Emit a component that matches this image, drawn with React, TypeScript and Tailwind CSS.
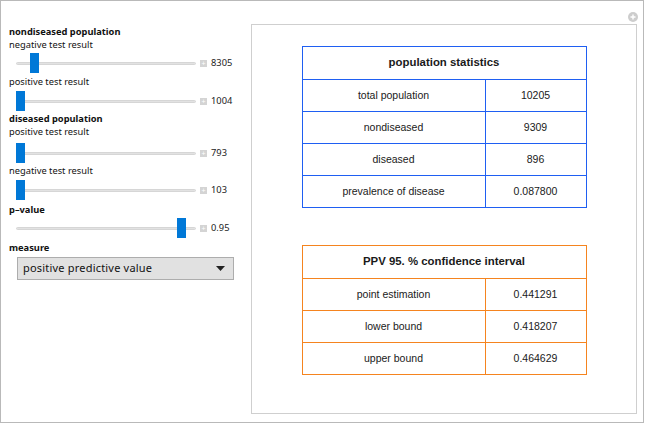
import React from 'react';

const BLUE = '#1f5ff2';

function Slider({ pos, value, className = '' }: { pos: number; value: string; className?: string }) {
  return (
    <div className={`flex h-[20px] items-center pl-[7px] ${className}`}>
      <div className="relative h-[20px] w-[180px]">
        <div className="absolute left-0 right-0 top-[9px] h-[3px] rounded-sm bg-[#e2e2e2] border border-[#d6d6d6]" />
        <div className="absolute top-0 h-[20px] w-[9px] bg-[#0078d7]" style={{ left: pos }} />
      </div>
      <div className="ml-[4px] flex h-[7px] w-[7px] items-center justify-center bg-[#d4d4d4]">
        <span className="block text-[7px] leading-none text-white">+</span>
      </div>
      <span className="ml-[4px] text-[9.3px] leading-none text-[#222]">{value}</span>
    </div>
  );
}

function Label({ children, bold = false, className = '' }: { children: React.ReactNode; bold?: boolean; className?: string }) {
  return (
    <div className={`h-[13px] text-[9.3px] leading-[13px] text-[#111] ${bold ? 'font-bold' : ''} ${className}`}>{children}</div>
  );
}

function StatTable({ title, rows, color }: { title: string; rows: [string, string][]; color: string }) {
  return (
    <table className="w-[285px] border-collapse text-[10.5px] text-[#1a1a1a]" style={{ fontFamily: '"Liberation Sans", Arial, sans-serif' }}>
      <tbody>
        <tr>
          <td colSpan={2} className="h-[33px] border text-center text-[11.4px] font-bold" style={{ borderColor: color }}>
            {title}
          </td>
        </tr>
        {rows.map(([k, v]) => (
          <tr key={k}>
            <td className="h-[32px] w-[183px] border text-center" style={{ borderColor: color }}>{k}</td>
            <td className="h-[32px] border text-center" style={{ borderColor: color }}>{v}</td>
          </tr>
        ))}
      </tbody>
    </table>
  );
}

export default function App() {
  return (
    <div className="h-[425px] w-[648px] bg-white" style={{ fontFamily: '"Noto Sans", "Open Sans", sans-serif' }}>
      <div className="relative flex h-[423px] w-[644px] border border-[#b9b9b9] bg-white">
        {/* controls */}
        <div className="flex w-[250px] flex-col pl-[8px] pt-[24px]">
          <Label bold>nondiseased population</Label>
          <Label>negative test result</Label>
          <Slider pos={14} value="8305" className="mt-[2px]" />
          <Label className="mt-[2px]">positive test result</Label>
          <Slider pos={0} value="1004" className="mt-[3px]" />
          <Label bold className="mt-[1px]">diseased population</Label>
          <Label>positive test result</Label>
          <Slider pos={0} value="793" className="mt-[5px]" />
          <Label className="mt-[1px]">negative test result</Label>
          <Slider pos={0} value="103" className="mt-[3px]" />
          <Label bold className="mt-[3px]">p–value</Label>
          <Slider pos={161} value="0.95" className="mt-[2px]" />
          <Label bold className="mt-[3px]">measure</Label>
          <div className="ml-[8px] mt-[3px] flex h-[23px] w-[217px] items-center justify-between border border-[#adadad] bg-[#e1e1e1] pl-[5px] pr-[8px]">
            <span className="text-[11px] tracking-[0.2px] text-[#111]">positive predictive value</span>
            <svg width="9" height="5" viewBox="0 0 9 5">
              <path d="M0 0 H9 L4.5 5 Z" fill="#222" />
            </svg>
          </div>
        </div>

        {/* output panel */}
        <div className="mt-[23px] flex h-[390px] w-[386px] flex-col items-center border border-[#cfcfcf] pt-[21px]">
          <StatTable
            title="population statistics"
            color={BLUE}
            rows={[
              ['total population', '10205'],
              ['nondiseased', '9309'],
              ['diseased', '896'],
              ['prevalence of disease', '0.087800'],
            ]}
          />
          <div className="h-[37px]" />
          <StatTable
            title="PPV 95. % confidence interval"
            color="#f5841f"
            rows={[
              ['point estimation', '0.441291'],
              ['lower bound', '0.418207'],
              ['upper bound', '0.464629'],
            ]}
          />
        </div>

        <div className="absolute right-[5px] top-[11px] flex h-[10px] w-[10px] items-center justify-center rounded-full bg-[#cdcdcd]">
          <svg width="6" height="6" viewBox="0 0 6 6">
            <path d="M3 0.5 V5.5 M0.5 3 H5.5" stroke="white" strokeWidth="1.4" />
          </svg>
        </div>
      </div>
    </div>
  );
}
